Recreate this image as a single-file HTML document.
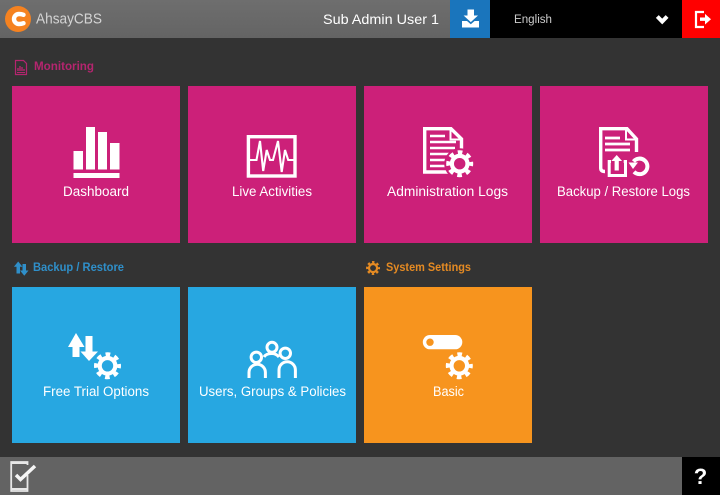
<!DOCTYPE html>
<html>
<head>
<meta charset="utf-8">
<style>
html,body{margin:0;padding:0;background:#333}
svg{display:block}
text{font-family:"Liberation Sans",sans-serif}
</style>
</head>
<body>
<svg width="720" height="495" viewBox="0 0 720 495" xmlns="http://www.w3.org/2000/svg">
<defs>
<linearGradient id="hd" x1="0" y1="0" x2="0" y2="1"><stop offset="0" stop-color="#6e6e6e"/><stop offset="1" stop-color="#646464"/></linearGradient>
<symbol id="gear" viewBox="-14 -14 28 28" overflow="visible">
<circle r="7.8" fill="none" stroke="currentColor" stroke-width="4.2"/>
<circle r="11.3" fill="none" stroke="currentColor" stroke-width="4.4" stroke-dasharray="4.6 4.28" stroke-dashoffset="2.3"/>
</symbol>
</defs>
<rect width="720" height="495" fill="#333"/>

<!-- Header -->
<rect width="720" height="38" fill="url(#hd)"/>
<circle cx="18" cy="19" r="13" fill="#f58220"/>
<path d="M23.500 14.800Q21.500 14 19 14A5 5 0 0 0 19 24Q21.500 24 23.500 23.200" fill="none" stroke="#fff" stroke-width="4.400" stroke-linecap="round"/>
<text x="36" y="23.500" font-size="15" fill="#d4d4d4" textLength="66" lengthAdjust="spacingAndGlyphs">AhsayCBS</text>
<text x="323" y="24" font-size="14" fill="#fff" textLength="116" lengthAdjust="spacingAndGlyphs">Sub Admin User 1</text>
<rect x="450" y="0" width="40" height="38" fill="#1a75bc"/>
<path d="M467.500 9.500h6.500v6h4l-7.200 6.600-7.200-6.600h3.900z" fill="#fff"/>
<path d="M462 21h5l3.800 3.200 3.800-3.200h4.400v6.500H462z" fill="#fff"/>
<rect x="490" y="0" width="192" height="38" fill="#000"/>
<text x="514" y="23" font-size="11.500" fill="#ccc" textLength="38" lengthAdjust="spacingAndGlyphs">English</text>
<path d="M657.300 16.500l4.900 5 4.900-5" fill="none" stroke="#fff" stroke-width="4"/>
<rect x="682" y="0" width="38" height="38" fill="#ff0000"/>
<path d="M704 12h-8v15h8" fill="none" stroke="#fff" stroke-width="2.200"/>
<path d="M700 17.500h5v-3.600l6 5.300-6 5.300v-3.600h-5z" fill="#fff"/>

<!-- Monitoring header -->
<path d="M15.500 60.500h8l3 3v11h-11z" fill="none" stroke="#b5256f" stroke-width="1.200"/>
<path d="M18 71v-3M20 71v-5M22 71v-4M24 71v-2" stroke="#b5256f" stroke-width="1.400"/>
<path d="M17 72.500h8" stroke="#b5256f"/>
<text x="34" y="70" font-size="11.500" font-weight="bold" fill="#b5256f" textLength="60" lengthAdjust="spacingAndGlyphs">Monitoring</text>

<!-- Pink tiles -->
<rect x="12" y="86" width="168" height="157" fill="#cc2079"/>
<rect x="188" y="86" width="168" height="157" fill="#cc2079"/>
<rect x="364" y="86" width="168" height="157" fill="#cc2079"/>
<rect x="540" y="86" width="168" height="157" fill="#cc2079"/>

<!-- Dashboard -->
<g fill="#fff">
<rect x="73.500" y="151" width="9.500" height="18.500"/>
<rect x="86" y="127" width="9" height="42.500"/>
<rect x="98" y="132" width="9" height="37.500"/>
<rect x="110" y="143" width="9.500" height="26.500"/>
<rect x="73.500" y="173" width="46" height="5"/>
</g>
<text x="63" y="196" font-size="13.500" fill="#fff" textLength="66" lengthAdjust="spacingAndGlyphs">Dashboard</text>

<!-- Live Activities -->
<rect x="248.400" y="136.700" width="46.600" height="39.300" fill="none" stroke="#fff" stroke-width="3.400"/>
<path d="M250 160h6.500l3.500-19 3.200 30 3.500-21 3.300 10h3l5-19 3.700 31 3.300-22 3.200 10h7.800" fill="none" stroke="#fff" stroke-width="2.100"/>
<text x="232" y="196" font-size="13.500" fill="#fff" textLength="80" lengthAdjust="spacingAndGlyphs">Live Activities</text>

<!-- Administration Logs -->
<path d="M452 172H424.700V128.700H451L461.500 139V153" fill="none" stroke="#fff" stroke-width="3.400"/>
<path d="M450.500 129v10.500h11" fill="none" stroke="#fff" stroke-width="2"/>
<path d="M430 136h15M430 142h26M430 148h25M430 154h20M430 160h18M430 166h15" stroke="#fff" stroke-width="2.600"/>
<circle cx="459.700" cy="163.700" r="15.500" fill="#cc2079"/>
<use href="#gear" x="445.700" y="149.700" width="28" height="28" color="#fff"/>
<text x="387" y="196" font-size="13.500" fill="#fff" textLength="121" lengthAdjust="spacingAndGlyphs">Administration Logs</text>

<!-- Backup / Restore Logs -->
<path d="M605 171.500Q600.700 171.500 600.700 168V128.700H627L636.500 139V152" fill="none" stroke="#fff" stroke-width="3.400"/>
<path d="M626 129v10.500h10.500" fill="none" stroke="#fff" stroke-width="2"/>
<path d="M605 138h15M605 144h25M605 150h25" stroke="#fff" stroke-width="2.800"/>
<path d="M611 161.500h-1.800v14h16.300v-14h-1.800" fill="none" stroke="#fff" stroke-width="3"/>
<path d="M616.700 155l5.400 6h-3.300v9.500h-4.200v-9.500h-3.300z" fill="#fff"/>
<path d="M633.500 161.500a7.800 7.800 0 1 1 0.500 10.300" fill="none" stroke="#fff" stroke-width="4"/>
<path d="M628.500 162.500h9.500l-5 6.500z" fill="#fff"/>
<text x="557" y="196" font-size="13.500" fill="#fff" textLength="133" lengthAdjust="spacingAndGlyphs">Backup / Restore Logs</text>

<!-- Section headers 2 -->
<g fill="#2f8fc9">
<path d="M18.200 261.500l4.300 5.300h-2.500v6.700h-3.500v-6.700h-2.600z"/>
<path d="M22.500 264h3.500v6.500h2.500l-4.200 5.300-4.300-5.300h2.500z"/>
</g>
<text x="33" y="271" font-size="11.500" font-weight="bold" fill="#2f8fc9" textLength="91" lengthAdjust="spacingAndGlyphs">Backup / Restore</text>
<use href="#gear" x="365.800" y="260.800" width="14.500" height="14.500" color="#e48a23"/>
<text x="386" y="271" font-size="11.500" font-weight="bold" fill="#e48a23" textLength="85" lengthAdjust="spacingAndGlyphs">System Settings</text>

<!-- Blue tiles -->
<rect x="12" y="287" width="168" height="156" fill="#27a7e1"/>
<rect x="188" y="287" width="168" height="156" fill="#27a7e1"/>

<!-- Free Trial -->
<g fill="#fff">
<path d="M76 333l8.500 14h-5v10h-7v-10h-4.500z"/>
<path d="M85.500 336h7v15.500h5.500l-9 9.500-8.500-9.500h5z"/>
</g>
<use href="#gear" x="93.500" y="351.800" width="28" height="28" color="#fff"/>
<text x="43" y="396" font-size="13.500" fill="#fff" textLength="106" lengthAdjust="spacingAndGlyphs">Free Trial Options</text>

<!-- Users -->
<g fill="none" stroke="#fff" stroke-width="3">
<circle cx="272" cy="347.300" r="5"/>
<circle cx="256.300" cy="357.300" r="5.200"/>
<circle cx="285.300" cy="353.300" r="5.200"/>
<path d="M249 378v-5.500a8.200 8.200 0 0 1 16.400 0v5.500"/>
<path d="M279 378v-8a8.200 8.200 0 0 1 16.400 0v8"/>
<path d="M264 357Q266 353.500 272 353.500Q276 353.500 279 357"/>
</g>
<text x="199" y="396" font-size="13.500" fill="#fff" textLength="147" lengthAdjust="spacingAndGlyphs">Users, Groups &amp; Policies</text>

<!-- Orange tile -->
<rect x="364" y="287" width="168" height="156" fill="#f7941e"/>
<rect x="422.800" y="335" width="39.500" height="14.300" rx="7.150" fill="#fff"/>
<circle cx="430" cy="342.200" r="3.700" fill="#f7941e"/>
<use href="#gear" x="445.300" y="351.800" width="28" height="28" color="#fff"/>
<text x="433" y="396" font-size="13.500" fill="#fff" textLength="31" lengthAdjust="spacingAndGlyphs">Basic</text>

<!-- Footer -->
<rect x="0" y="457" width="720" height="38" fill="#636363"/>
<rect x="682" y="457" width="38" height="38" fill="#000"/>
<path d="M27.500 475v16H11.200V462h16.300v3" fill="none" stroke="#e8e8e8" stroke-width="1.800"/>
<path d="M11 463h16.500M11 489h16.500" stroke="#e8e8e8" stroke-width="2"/>
<path d="M16 475l4.500 4.500 14.500-13.500" fill="none" stroke="#f5f5f5" stroke-width="3.500"/>
<text x="700.500" y="484" font-size="22" font-weight="bold" fill="#fff" text-anchor="middle">?</text>
</svg>
</body>
</html>
